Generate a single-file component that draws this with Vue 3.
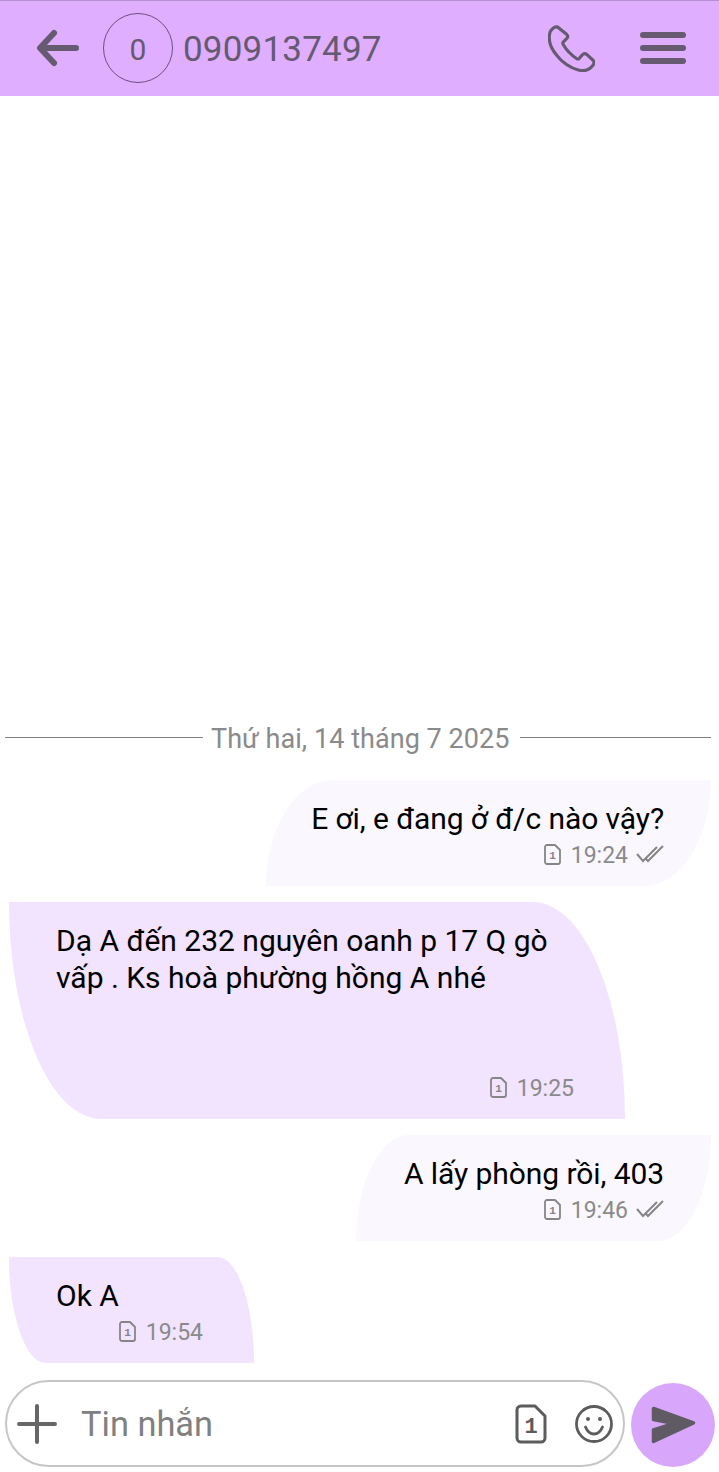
<script setup>
const messages = [
  { id: 1, mine: true, width: 445, text: 'E ơi, e đang ở đ/c nào vậy?', time: '19:24' },
  { id: 2, mine: false, width: 616, text: 'Dạ A đến 232 nguyên oanh p 17 Q gò vấp . Ks hoà phường hồng A nhé\n\n\n', time: '19:25' },
  { id: 3, mine: true, width: 355, text: 'A lấy phòng rồi, 403', time: '19:46' },
  { id: 4, mine: false, width: 245, text: 'Ok A', time: '19:54' },
]
</script>

<template>
  <div class="screen">
    <header class="topbar">
      <svg class="back" viewBox="0 0 46 42" width="46" height="42" fill="none" stroke="#655a6f" stroke-width="6" stroke-linecap="round" stroke-linejoin="round">
        <path d="M42 21H7M20 6 6 21l14 15" />
      </svg>
      <div class="avatar">0</div>
      <div class="number">0909137497</div>
      <svg class="phone" viewBox="0 0 48 48" width="47" height="47" fill="none" stroke="#655a6f" stroke-width="3.200" stroke-linejoin="round">
        <path d="M3.500 5C6 2 9 1 11 3l8 6.500c1.500 1.500 1.500 3 0 4.500l-3.500 3.500c-.5.500-.5 1.500 0 2.500 3.500 6 8.500 11 14 14.500 1 .5 1.500.5 2.500-.5l3-3.500c1.500-1.500 3-1.500 4.500-.5l6.500 6c1.500 1.500 1.500 3 0 5-3.500 5-9 6.500-15 5-8-2-17-8-22-15C3 24 .5 17 1.500 10c.2-2 1-4 2-5z" />
      </svg>
      <div class="menu"><i></i><i></i><i></i></div>
    </header>

    <main class="thread">
      <div class="date"><span>Thứ hai, 14 tháng 7 2025</span></div>
      <div v-for="m in messages" :key="m.id" class="row" :class="{ mine: m.mine }">
        <div class="bubble" :style="{ width: m.width + 'px' }">
          <div class="text">{{ m.text }}</div>
          <div class="meta">
            <svg class="sim" viewBox="0 0 17 21" width="17" height="21" fill="none" stroke="#858585" stroke-width="1.800" stroke-linejoin="round">
              <path d="M3 1h8l5 5v12a2 2 0 0 1-2 2H3a2 2 0 0 1-2-2V3a2 2 0 0 1 2-2z" />
              <text x="8.500" y="14.500" text-anchor="middle" class="sim-num" fill="#858585" stroke="none">1</text>
            </svg>
            <span class="time">{{ m.time }}</span>
            <svg v-if="m.mine" class="ticks" viewBox="0 0 28 18" width="28" height="18" fill="none" stroke="#858585" stroke-width="2">
              <path d="M1 9l6 7L21 2M10 14l2 2L27 1" />
            </svg>
          </div>
        </div>
      </div>
    </main>

    <footer class="composer">
      <div class="field">
        <svg class="plus" viewBox="0 0 40 40" width="40" height="40" stroke="#666" stroke-width="4" stroke-linecap="round">
          <path d="M20 2v36M2 20h36" />
        </svg>
        <span class="hint">Tin nhắn</span>
        <svg class="sim-big" viewBox="0 0 32 40" width="32" height="40" fill="none" stroke="#5c5c5c" stroke-width="3" stroke-linejoin="round">
          <path d="M6 2h14l10 10v22a4 4 0 0 1-4 4H6a4 4 0 0 1-4-4V6a4 4 0 0 1 4-4z" />
          <text x="16" y="29" text-anchor="middle" class="sim-big-num" fill="#5c5c5c" stroke="none">1</text>
        </svg>
        <svg class="smile" viewBox="0 0 38 38" width="38" height="38" fill="none" stroke="#5c5c5c" stroke-width="2.800">
          <circle cx="19" cy="19" r="17.500" />
          <path d="M10.500 22c2 5 5 7 8.500 7s6.500-2 8.500-7" stroke-linecap="round" />
          <circle cx="13" cy="14" r="2" fill="#5c5c5c" stroke="none" />
          <circle cx="25" cy="14" r="2" fill="#5c5c5c" stroke="none" />
        </svg>
      </div>
      <div class="send">
        <svg viewBox="0 0 46 40" width="46" height="40" fill="#5f5a63" stroke="#5f5a63" stroke-width="3.500" stroke-linejoin="round">
          <path d="M3.500 3.500 43.500 18 3.500 36.500V25L24 18.500 3.500 14.500z" />
        </svg>
      </div>
    </footer>
  </div>
</template>

<style scoped>
.screen {
  width: 719px;
  height: 1472px;
  display: flex;
  flex-direction: column;
  background: #fff;
  font-family: Roboto, "Noto Sans", sans-serif;
  overflow: hidden;
}
.topbar {
  height: 96px;
  box-sizing: border-box;
  flex: none;
  display: flex;
  align-items: center;
  padding: 0 33px 1px 34px;
  background: #dfaeff;
  border-top: 1px solid #b68fd6;
  color: #655a6f;
}
.back {
  margin-right: 23px;
}
.avatar {
  width: 70px;
  height: 70px;
  box-sizing: border-box;
  flex: none;
  border: 1px solid #6f4f80;
  border-radius: 50%;
  display: flex;
  align-items: center;
  justify-content: center;
  font-size: 30px;
  padding-top: 2px;
  margin-right: 10px;
}
.number {
  font-size: 35px;
  letter-spacing: 0.2px;
  flex: 1;
  padding-top: 3px;
}
.phone {
  margin-right: 45px;
}
.menu {
  width: 46px;
  display: flex;
  flex-direction: column;
  gap: 7px;
}
.menu i {
  height: 6px;
  border-radius: 3px;
  background: #655a6f;
}
.thread {
  flex: 1;
  display: flex;
  flex-direction: column;
  justify-content: flex-end;
  gap: 16px;
  padding: 0 8px 17px 9px;
}
.date {
  display: flex;
  align-items: center;
  gap: 8px;
  margin: 0 0 8px -4px;
  color: #8a8a8a;
  font-size: 27px;
  letter-spacing: 0.05px;
  line-height: 34px;
}
.date span {
  margin-right: 2px;
}
.date::before,
.date::after {
  content: "";
  flex: 1;
  height: 1px;
  margin-bottom: 3px;
  background: #808080;
}
.date::before {
  flex: none;
  width: 198px;
}
.row {
  display: flex;
}
.row.mine {
  justify-content: flex-end;
}
.bubble {
  box-sizing: border-box;
  padding: 20px 51px 15px 47px;
  background: #f2e3fe;
  border-radius: 0 15% 0 15% / 0 100% 0 100%;
}
.mine .bubble {
  padding: 20px 47px 15px 30px;
  background: #faf8fe;
  border-radius: 15% 0 15% 0 / 100% 0 100% 0;
}
.text {
  font-size: 30px;
  line-height: 37px;
  color: #000;
  white-space: pre-line;
}
.mine .text {
  text-align: right;
  letter-spacing: -0.08px;
}
.meta {
  display: flex;
  align-items: center;
  justify-content: flex-end;
  height: 34px;
  gap: 10px;
  font-size: 23px;
  color: #8a8a8a;
}
.time {
  padding-top: 2px;
}
.ticks {
  margin-left: -2px;
}
.sim-num {
  font-family: "Liberation Mono", monospace;
  font-size: 11px;
  font-weight: 700;
}
.sim-big-num {
  font-family: "Liberation Mono", monospace;
  font-size: 22px;
  font-weight: 700;
}
.composer {
  flex: none;
  display: flex;
  align-items: flex-start;
  gap: 6px;
  height: 92px;
  padding: 0 4px 0 5px;
}
.field {
  flex: 1;
  height: 87px;
  box-sizing: border-box;
  border: 2px solid #c6c6c6;
  border-radius: 44px;
  display: flex;
  align-items: center;
  padding: 0 10px 0 10px;
}
.hint {
  flex: 1;
  font-size: 34.400px;
  color: #808080;
  margin-left: 24px;
}
.sim-big {
  margin-right: 28px;
}
.send {
  width: 84px;
  height: 84px;
  margin-top: 3px;
  flex: none;
  border-radius: 50%;
  background: #d8a7fb;
  display: flex;
  align-items: center;
  justify-content: center;
}
</style>
